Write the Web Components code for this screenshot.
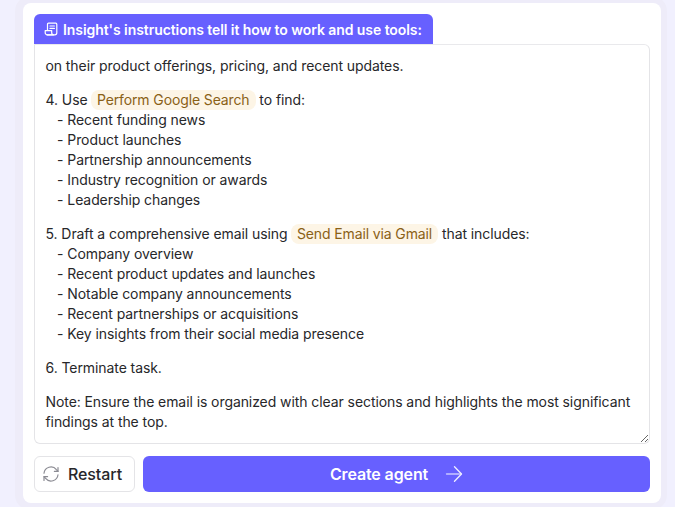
<!DOCTYPE html>
<html>
<head>
<meta charset="utf-8">
<title>Create agent</title>
<style>
  html,body{margin:0;padding:0;height:100%;}
  body{background:#f1f0fe;font-family:Inter,"Liberation Sans",sans-serif;overflow:hidden;}
</style>
</head>
<body>
<agent-panel>
  <span slot="title">Insight's instructions tell it how to work and use tools:</span>
  <instruction-box>
    <p>on their product offerings, pricing, and recent updates.</p>
    <p>4. Use <tool-pill>Perform Google Search</tool-pill> to find:<br>
    &nbsp;&nbsp; - Recent funding news<br>
    &nbsp;&nbsp; - Product launches<br>
    &nbsp;&nbsp; - Partnership announcements<br>
    &nbsp;&nbsp; - Industry recognition or awards<br>
    &nbsp;&nbsp; - Leadership changes</p>
    <p>5. Draft a comprehensive email using <tool-pill>Send Email via Gmail</tool-pill> that includes:<br>
    &nbsp;&nbsp; - Company overview<br>
    &nbsp;&nbsp; - Recent product updates and launches<br>
    &nbsp;&nbsp; - Notable company announcements<br>
    &nbsp;&nbsp; - Recent partnerships or acquisitions<br>
    &nbsp;&nbsp; - Key insights from their social media presence</p>
    <p>6. Terminate task.</p>
    <p>Note: Ensure the email is organized with clear sections and highlights the most significant findings at the top.</p>
  </instruction-box>
  <restart-button slot="actions">Restart</restart-button>
  <create-button slot="actions">Create agent</create-button>
</agent-panel>

<script>
class AgentPanel extends HTMLElement{
  constructor(){
    super()
    this.attachShadow({mode:'open'});
    this.shadowRoot.innerHTML = `
      <style>
        :host{
          display:block;
          box-sizing:border-box;
          width:638px;
          height:500px;
          margin:3px 0 0 23px;
          padding:11px;
          background:#fff;
          border-radius:8px;
          box-shadow:-1px 0 0 7px #eeecf9;
        }
        .tab{
          display:flex;
          align-items:center;
          gap:5px;
          box-sizing:border-box;
          width:399px;
          height:30px;
          padding:0 11px 0 10px;
          background:#6760ff;
          color:#fff;
          font-size:14px;
          font-weight:600;
          letter-spacing:-.07px;
          border-radius:6px 6px 0 0;
          white-space:nowrap;
        }
        .tab svg{flex:none;}
        .actions{display:flex;gap:8px;margin-top:12px;}
      </style>
      <div class="tab">
        <svg width="14" height="14" viewBox="0 0 14 14" fill="none" stroke="#fff" stroke-width="1.2" stroke-linejoin="round" stroke-linecap="round">
          <path d="M3.5 8V2.2c0-.6.4-1 1-1h7.3c.6 0 1 .4 1 1v8.6c0 1.1-.9 2-2 2H3"/>
          <path d="M6 4h4.4M6 6.4h4.4"/>
          <path d="M1.2 8.6h6.5v2.2c0 1.1.8 2 1.9 2H3c-1 0-1.8-.9-1.8-2z"/>
        </svg>
        <slot name="title"></slot>
      </div>
      <slot></slot>
      <div class="actions"><slot name="actions"></slot></div>
    `;
  }
}
customElements.define('agent-panel',AgentPanel);

class InstructionBox extends HTMLElement{
  constructor(){
    super()
    this.attachShadow({mode:'open'});
    this.shadowRoot.innerHTML = `
      <style>
        :host{
          display:block;
          box-sizing:border-box;
          width:616px;
          height:400px;
          padding:11px 10px 11px 10.5px;
          background:#fff;
          border:1px solid #e4e4e7;
          border-top-color:#e9e9ec;
          border-radius:0 6px 6px 6px;
          font-size:14px;
          line-height:20px;
          letter-spacing:-.08px;
          color:#27272a;
          overflow:hidden;
          resize:vertical;
        }
        ::slotted(p){margin:0 0 14px;}
      </style>
      <slot></slot>
    `;
  }
}
customElements.define('instruction-box',InstructionBox);

class ToolPill extends HTMLElement{
  constructor(){
    super()
    this.attachShadow({mode:'open'});
    this.shadowRoot.innerHTML = `
      <style>
        :host{
          display:inline-block;
          height:20px;
          line-height:20px;
          padding:0 6px 0 5.5px;
          background:#fdf5e6;
          color:#8a6116;
          border-radius:8px;
          letter-spacing:-.12px;
        }
      </style>
      <slot></slot>
    `;
  }
}
customElements.define('tool-pill',ToolPill);

class RestartButton extends HTMLElement{
  constructor(){
    super()
    this.attachShadow({mode:'open'});
    this.shadowRoot.innerHTML = `
      <style>
        :host{
          display:flex;
          align-items:center;
          gap:9px;
          box-sizing:border-box;
          width:101px;
          height:36px;
          padding:0 12px 0 8px;
          background:#fff;
          border:1px solid #e4e4e7;
          border-radius:6px;
          color:#27272a;
          font-size:16px;
          font-weight:500;
          letter-spacing:-.1px;
        }
        svg{flex:none;}
      </style>
      <svg width="16" height="16" viewBox="0 0 16 16" fill="none" stroke="#8b8b93" stroke-width="1.2" stroke-linecap="round" stroke-linejoin="round">
        <path d="M1 7.2A7 7 0 0 1 13.4 3.6L15 5.4"/>
        <path d="M15 1.6v3.8h-3.6"/>
        <path d="M15 8.8A7 7 0 0 1 2.6 12.4L1 10.6"/>
        <path d="M1 14.4v-3.8h3.6"/>
      </svg>
      <slot></slot>
    `;
  }
}
customElements.define('restart-button',RestartButton);

class CreateButton extends HTMLElement{
  constructor(){
    super()
    this.attachShadow({mode:'open'});
    this.shadowRoot.innerHTML = `
      <style>
        :host{
          flex:1;
          display:flex;
          align-items:center;
          justify-content:center;
          gap:17px;
          height:36px;
          background:#6760ff;
          border-radius:6px;
          color:#fff;
          font-size:16px;
          font-weight:600;
          letter-spacing:-.12px;
        }
      </style>
      <slot></slot>
      <svg width="18" height="16" viewBox="0 0 18 16" fill="none" stroke-width="1.3" stroke-linecap="round" stroke-linejoin="round">
        <path d="M1.5 8H16" stroke="#c9c6ff"/>
        <path d="M9.5 .8l7 7.2-7 7.2" stroke="#f1f0ff"/>
      </svg>
    `;
  }
}
customElements.define('create-button',CreateButton);
</script>
</body>
</html>
